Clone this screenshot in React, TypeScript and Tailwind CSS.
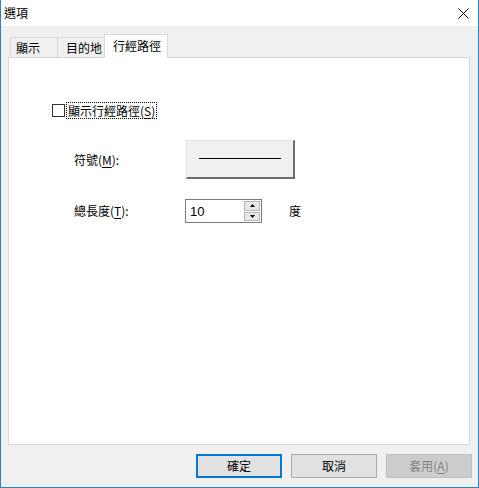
const font = { fontFamily: '"Noto Sans CJK TC", "Liberation Sans", sans-serif' };

function Tab({ label, active, className }: { label: string; active?: boolean; className?: string }) {
  if (active) {
    return (
      <div className={`relative z-10 -mb-px flex h-[24px] items-start border-x border-t border-[#d9d9d9] bg-white pt-[2px] ${className}`}>
        <span className="text-[12px] leading-[18px] text-black">{label}</span>
      </div>
    );
  }
  return (
    <div className={`mt-[3px] flex h-[20px] items-start border-l border-t border-[#d9d9d9] bg-[#f0f0f0] pt-[1px] ${className}`}>
      <span className="text-[12px] leading-[18px] text-black">{label}</span>
    </div>
  );
}

function DlgButton({ children, kind }: { children: React.ReactNode; kind: "default" | "normal" | "disabled" }) {
  const cls =
    kind === "default"
      ? "border-2 border-[#0078d7] bg-[#e1e1e1] text-black"
      : kind === "disabled"
      ? "border border-[#bfbfbf] bg-[#cccccc] text-[#838383]"
      : "border border-[#adadad] bg-[#e1e1e1] text-black";
  return (
    <div className={`flex h-[24px] w-[86px] items-center justify-center text-[12px] leading-none ${cls}`}>{children}</div>
  );
}

export default function App() {
  return (
    <div className="flex h-[488px] w-[479px] flex-col border-x border-b border-[#2b84bd] bg-[#f0f0f0]" style={font}>
      {/* title bar */}
      <div className="flex h-[26px] shrink-0 items-center justify-between bg-white pl-[3px] pr-[9px]">
        <span className="text-[12px] leading-none text-black">選項</span>
        <svg width="11" height="11" viewBox="0 0 11 11" className="mt-[1px]">
          <path d="M0.5 0.5 L10.5 10.5 M10.5 0.5 L0.5 10.5" stroke="#000" strokeWidth="1" />
        </svg>
      </div>

      {/* tabs */}
      <div className="mt-[8px] flex pl-[9px]">
        <Tab label="顯示" className="w-[47px] pl-[5px]" />
        <Tab label="目的地" className="w-[47px] pl-[8px]" />
        <Tab label="行經路徑" active className="w-[64px] pl-[8px]" />
      </div>

      {/* panel */}
      <div className="ml-[7px] h-[388px] w-[462px] border border-[#d9d9d9] bg-white">
        <div className="flex flex-col pl-[43px] pt-[44px] text-[12px] text-black">
          <div className="flex h-[17px] items-center">
            <div className="h-[13px] w-[13px] border border-[#333333] bg-white" />
            <div className="ml-[1px] flex h-[17px] items-center border border-dotted border-black px-[1px] leading-none">
              顯示行經路徑(<span className="underline underline-offset-2">S</span>)
            </div>
          </div>

          <div className="mt-[21px] flex items-center pl-[22px]">
            <span className="w-[112px] leading-none">
              符號(<span className="underline underline-offset-2">M</span>):
            </span>
            <div className="flex h-[39px] w-[109px] items-center justify-center border-b-2 border-l border-r-2 border-t border-b-[#6d6d6d] border-l-[#e3e3e3] border-r-[#6d6d6d] border-t-[#e3e3e3] bg-[#f0f0f0]">
              <div className="mb-px h-px w-[82px] bg-black" />
            </div>
          </div>

          <div className="mt-[20px] flex items-center pl-[22px]">
            <span className="w-[111px] leading-none">
              總長度(<span className="underline underline-offset-2">T</span>):
            </span>
            <div className="flex h-[24px] w-[77px] items-center border border-[#7a7a7a] bg-white">
              <span className="flex-1 pl-[4px] text-[13px] leading-none" style={{ fontFamily: '"Liberation Sans", sans-serif' }}>
                10
              </span>
              <div className="mr-px flex h-[20px] w-[16px] flex-col gap-px">
                <div className="flex flex-1 items-center justify-center border border-[#b5b5b5] bg-[#e8e8e8]">
                  <svg width="5" height="3" viewBox="0 0 5 3"><path d="M2.5 0 L5 3 L0 3 Z" fill="#000" /></svg>
                </div>
                <div className="flex flex-1 items-center justify-center border border-[#b5b5b5] bg-[#e8e8e8]">
                  <svg width="5" height="3" viewBox="0 0 5 3"><path d="M0 0 L5 0 L2.5 3 Z" fill="#000" /></svg>
                </div>
              </div>
            </div>
            <span className="ml-[27px] leading-none">度</span>
          </div>
        </div>
      </div>

      {/* buttons */}
      <div className="mt-[9px] flex justify-end gap-[9px] pr-[6px]">
        <DlgButton kind="default">確定</DlgButton>
        <DlgButton kind="normal">取消</DlgButton>
        <DlgButton kind="disabled">
          套用(<span className="underline underline-offset-2">A</span>)
        </DlgButton>
      </div>
    </div>
  );
}
